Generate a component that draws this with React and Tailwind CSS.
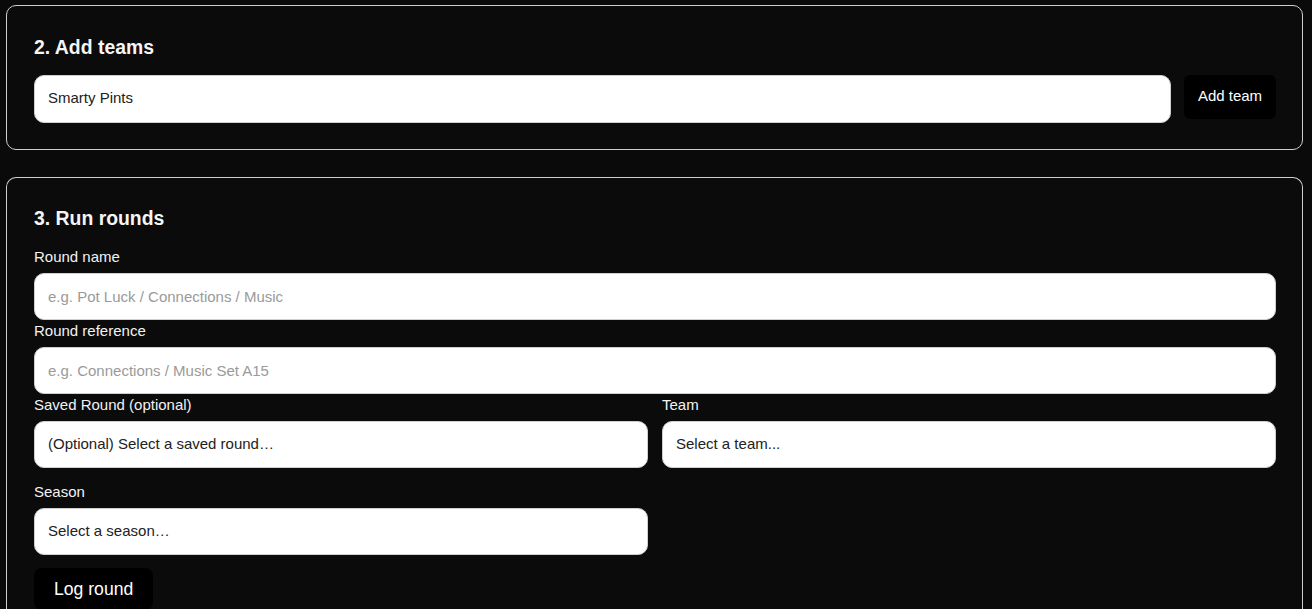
import React from "react";

const font = { fontFamily: '"Liberation Sans", Arial, sans-serif' };

function Field({ label, children }) {
  return (
    <div className="flex flex-col">
      <label className="text-[15px] leading-[21px] text-[#f2f2f2] mb-[6px]">{label}</label>
      {children}
    </div>
  );
}

const boxCls =
  "h-[47px] w-full rounded-[10px] bg-white border border-[#cfcfcf] px-[13px] text-[15px] text-[#222] outline-none";

function TextBox({ placeholder, value }) {
  return (
    <input
      className={boxCls + " placeholder:text-[#9a9a9a]"}
      placeholder={placeholder}
      defaultValue={value}
    />
  );
}

function Picker({ text }) {
  return (
    <select className={boxCls + " appearance-none"} defaultValue="">
      <option value="">{text}</option>
    </select>
  );
}

export default function App() {
  return (
    <div className="min-h-[609px] bg-[#0a0a0a] pt-[5px] overflow-hidden" style={font}>
      {/* Teams card */}
      <section className="ml-[6px] w-[1297px] rounded-[10px] border border-[#cfcfcf] bg-[#0b0b0b] pl-[27px] pr-[26px] pt-[30px] pb-[26px]">
        <h2 className="text-[19.4px] leading-[23px] font-bold text-[#f5f5f5] mb-[16px]">2. Add teams</h2>
        <div className="flex items-start gap-[13px]">
          <input
            className="h-[48px] flex-1 rounded-[10px] bg-white border border-[#cfcfcf] px-[13px] pb-[3px] text-[15px] text-[#222] outline-none"
            defaultValue="Smarty Pints"
          />
          <button className="h-[44px] w-[92px] rounded-[6px] bg-black pb-[2px] text-[15px] text-white">Add team</button>
        </div>
      </section>

      {/* Rounds card */}
      <section className="mt-[27px] ml-[6px] w-[1297px] rounded-t-[10px] border border-b-0 border-[#cfcfcf] bg-[#0b0b0b] pl-[27px] pr-[26px] pt-[29px] pb-[20px]">
        <h2 className="text-[19.4px] leading-[23px] font-bold text-[#f5f5f5] mb-[16px]">3. Run rounds</h2>
        <Field label="Round name">
          <TextBox placeholder="e.g. Pot Luck / Connections / Music" />
        </Field>
        <Field label="Round reference">
          <TextBox placeholder="e.g. Connections / Music Set A15" />
        </Field>
        <div className="grid grid-cols-2 gap-x-[14px] gap-y-[13px]">
          <Field label="Saved Round (optional)">
            <Picker text="(Optional) Select a saved round…" />
          </Field>
          <Field label="Team">
            <Picker text="Select a team..." />
          </Field>
          <Field label="Season">
            <Picker text="Select a season…" />
          </Field>
        </div>
        <button className="mt-[13px] h-[42px] rounded-[8px] bg-black px-[20px] text-[17.6px] text-white">Log round</button>
      </section>
    </div>
  );
}
